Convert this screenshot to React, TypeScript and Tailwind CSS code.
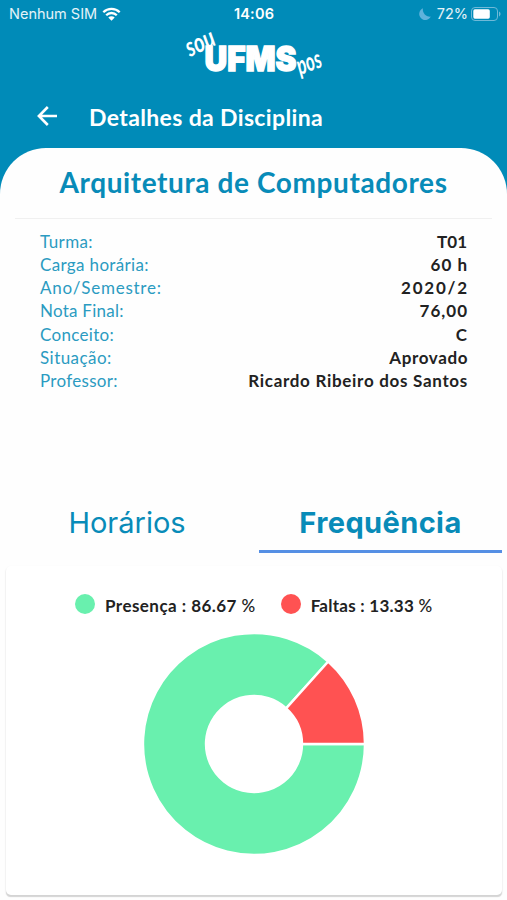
import React from 'react'

interface Slice {
  label: string
  value: number
  color: string
  className: string
}

interface Detail {
  label: string
  value: string
  labelClass: string
  valueClass: string
}

const details: Detail[] = [
  {
    label: 'Turma:',
    value: 'T01',
    labelClass: 'tracking-[0.4px]',
    valueClass: 'tracking-normal',
  },
  {
    label: 'Carga horária:',
    value: '60 h',
    labelClass: 'tracking-[0.35px]',
    valueClass: 'tracking-[1px] -mr-px',
  },
  {
    label: 'Ano/Semestre:',
    value: '2020/2',
    labelClass: 'tracking-[0.75px]',
    valueClass: 'tracking-[1.8px] -mr-[2px]',
  },
  {
    label: 'Nota Final:',
    value: '76,00',
    labelClass: 'tracking-[0.25px]',
    valueClass: 'tracking-[1px] -mr-px',
  },
  {
    label: 'Conceito:',
    value: 'C',
    labelClass: 'tracking-[0.3px]',
    valueClass: 'tracking-normal',
  },
  {
    label: 'Situação:',
    value: 'Aprovado',
    labelClass: 'tracking-[0.45px]',
    valueClass: 'tracking-[0.6px] -mr-px',
  },
  {
    label: 'Professor:',
    value: 'Ricardo Ribeiro dos Santos',
    labelClass: 'tracking-[0.3px]',
    valueClass: 'tracking-[0.7px] -mr-px',
  },
]

const slices: Slice[] = [
  {
    label: 'Presença',
    value: 86.67,
    color: '#69f0ae',
    className: 'tracking-[0.45px]',
  },
  {
    label: 'Faltas',
    value: 13.33,
    color: '#ff5252',
    className: 'tracking-[0.25px]',
  },
]

const StatusBar: React.FC = () => (
  <div className="flex h-7 items-center justify-between pl-[9px] pr-[6px] font-['Inter'] text-[14.5px] text-white/90">
    <div className="flex flex-1 items-center gap-[5px]">
      <span>Nenhum SIM</span>
      <svg viewBox="0 0 19 14" className="h-[14px] w-[19px]" fill="none">
        <path
          d="M1.3 5.2a11.7 11.7 0 0 1 16.4 0M4.2 8.2a7.5 7.5 0 0 1 10.6 0"
          stroke="white"
          strokeWidth="2.3"
        />
        <path d="M9.5 13.8 6.3 10.6a4.5 4.5 0 0 1 6.4 0z" fill="white" />
      </svg>
    </div>
    <span className="mr-[2px] font-semibold tracking-[0.2px] text-white">
      14:06
    </span>
    <div className="flex flex-1 items-center justify-end">
      <svg viewBox="0 0 12 12" className="mr-[6px] h-3 w-3">
        <path d="M4 .3A7 7 0 0 0 11.8 8.6 6.1 6.1 0 1 1 4 .3z" fill="#5fb2dc" />
      </svg>
      <span>72%</span>
      <svg viewBox="0 0 30 14" className="ml-[3px] h-[14px] w-[30px]">
        <rect
          x=".5"
          y=".5"
          width="26"
          height="13"
          rx="3.5"
          fill="none"
          stroke="#6fb9d8"
        />
        <rect x="2.3" y="2.3" width="16.5" height="9.4" rx="1.6" fill="white" />
        <path d="M28 4.6c2 .7 2 4.1 0 4.8z" fill="#6fb9d8" />
      </svg>
    </div>
  </div>
)

const Logo: React.FC = () => (
  <svg
    viewBox="0 0 180 64"
    className="mx-auto h-16 w-[180px] overflow-visible"
    fill="white"
    stroke="white"
  >
    <text
      transform="translate(26 29) rotate(-25)"
      textLength="30"
      lengthAdjust="spacingAndGlyphs"
      className="font-['Lato'] text-[27px] font-bold italic"
      strokeWidth="0"
    >
      sou
    </text>
    <text
      x="40.5"
      y="43"
      textLength="92"
      lengthAdjust="spacingAndGlyphs"
      className="font-['Inter'] text-[34px] font-black"
      strokeWidth="1.4"
    >
      UFMS
    </text>
    <text
      transform="translate(136 47) rotate(-20)"
      textLength="25"
      lengthAdjust="spacingAndGlyphs"
      className="font-['Lato'] text-[26px] font-bold italic"
      strokeWidth="0"
    >
      pos
    </text>
  </svg>
)

const Header: React.FC = () => (
  <header>
    <StatusBar />
    <Logo />
    <div className="flex h-14 items-center pb-[6px] pl-[37px] text-white">
      <button className="mr-[32px] mt-[-2px]">
        <svg
          viewBox="0 0 20 20"
          className="h-5 w-5"
          fill="none"
          stroke="white"
          strokeWidth="2.6"
        >
          <path d="M20 10H2.4M10.8 1 1.9 10l8.9 9" />
        </svg>
      </button>
      <h1 className="text-[23px] font-bold tracking-[0.36px]">
        Detalhes da Disciplina
      </h1>
    </div>
  </header>
)

const point = (radius: number, turn: number) => {
  const angle = turn * Math.PI * 2
  return `${111 + radius * Math.cos(angle)} ${111 + radius * Math.sin(angle)}`
}

const Donut: React.FC = () => {
  let start = 0
  return (
    <svg viewBox="0 0 222 222" className="mx-auto mt-[14px] h-[222px] w-[222px]">
      {slices.map((slice) => {
        const from = start
        const to = start + slice.value / 100
        const large = to - from > 0.5 ? 1 : 0
        start = to
        return (
          <path
            key={slice.label}
            d={`M${point(111, from)} A111 111 0 ${large} 1 ${point(111, to)} L${point(48, to)} A48 48 0 ${large} 0 ${point(48, from)}Z`}
            fill={slice.color}
            stroke="white"
            strokeWidth="2.4"
          />
        )
      })}
    </svg>
  )
}

const App: React.FC = () => {
  return (
    <div className="h-[900px] w-[507px] overflow-hidden bg-[#fefefe] font-['Lato',sans-serif]">
      <div className="bg-[#008bb8]">
        <Header />
        <section className="rounded-t-[46px] bg-[#fefefe] px-[15px]">
          <h2 className="flex h-[71px] items-center justify-center border-b border-[#f0f0f0] pb-[2px] text-[28px] font-bold tracking-[0.6px] text-[#088bb8]">
            Arquitetura de Computadores
          </h2>
        </section>
      </div>
      <dl className="h-[263px] px-10 pt-[11px]">
        {details.map(({ label, value, labelClass, valueClass }) => (
          <div
            key={label}
            className="flex h-[23.2px] items-center justify-between text-[17px]"
          >
            <dt className={`text-[#2b9bc1] ${labelClass}`}>{label}</dt>
            <dd className={`font-bold text-[#222222] ${valueClass}`}>{value}</dd>
          </div>
        ))}
      </dl>
      <nav className="flex h-[71px] px-[5px] text-center font-['Inter'] text-[29px] text-[#088bb8]">
        <button className="flex-1 pr-[10px] pt-[11px]">Horários</button>
        <button className="w-[243px] border-b-[3px] border-[#558fe4] pt-[14px] font-bold tracking-[0.4px]">
          Frequência
        </button>
      </nav>
      <main className="ml-[6px] mr-[5px] mt-[13px] h-[329px] rounded-[5px] bg-white shadow-[0_2px_1px_-0.5px_#d4d4d4,0_1px_2px_#e2e2e2]">
        <div className="flex items-center pl-[69px] pt-[27px] text-[17px] font-bold text-[#222222]">
          {slices.map((slice) => (
            <div
              key={slice.label}
              className={`mr-[25px] flex items-center ${slice.className}`}
            >
              <span
                className="mb-1 mr-[10px] h-5 w-5 rounded-full"
                style={{ backgroundColor: slice.color }}
              />
              <span>
                {slice.label} : {slice.value}{' '}
                <span className="font-medium">%</span>
              </span>
            </div>
          ))}
        </div>
        <Donut />
      </main>
    </div>
  )
}

export default App
